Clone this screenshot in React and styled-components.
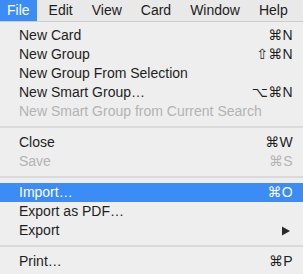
import React from "react";
import styled, { createGlobalStyle } from "styled-components";

const Global = createGlobalStyle`
  html, body { margin: 0; padding: 0; background: #eeeeee; }
  body { font-family: "Liberation Sans", "DejaVu Sans", sans-serif; -webkit-font-smoothing: antialiased; }
`;

const Page = styled.div`
  width: 303px;
  height: 274px;
  overflow: hidden;
  background: #eeeeee;
  display: flex;
  flex-direction: column;
`;

const MenuBar = styled.div`
  display: flex;
  height: 22px;
  box-sizing: border-box;
  border-bottom: 1px solid #cdcdcd;
  background: #e9e9e9;
`;

const Title = styled.div`
  font-size: 14px;
  line-height: 21px;
  padding: 0 9.5px;
  color: ${(p) => (p.$active ? "#ffffff" : "#1c1c1c")};
  background: ${(p) => (p.$active ? "#3b8cf6" : "transparent")};
  &:first-child {
    padding: 0 7.5px 0 7px;
    margin-right: 2px;
  }
`;

const Menu = styled.div`
  display: flex;
  flex-direction: column;
  padding: 4px 0 3px;
`;

const Row = styled.div`
  display: flex;
  align-items: center;
  justify-content: space-between;
  height: 19px;
  padding: 0 10px 0 19px;
  font-size: 14px;
  line-height: 19px;
  color: ${(p) => (p.$active ? "#ffffff" : p.$disabled ? "#b3b3b3" : "#1e1e1e")};
  background: ${(p) => (p.$active ? "#3b8cf6" : "transparent")};
`;

const Shortcut = styled.span`
  font-family: "Liberation Sans", "DejaVu Sans", sans-serif;
  white-space: nowrap;
  letter-spacing: 0.3px;
`;

const Sep = styled.div`
  height: 2px;
  margin: 5px 0;
  background: #dadada;
`;

const ArrowIcon = styled.svg`
  margin-right: 3px;
`;

const Arrow = () => (
  <ArrowIcon width="8" height="10" viewBox="0 0 8 10">
    <path d="M0 0.5 L8 5 L0 9.5 Z" fill="#2a2a2a" />
  </ArrowIcon>
);

const groups = [
  [
    { label: "New Card", sc: "⌘N" },
    { label: "New Group", sc: "⇧⌘N" },
    { label: "New Group From Selection" },
    { label: "New Smart Group…", sc: "⌥⌘N" },
    { label: "New Smart Group from Current Search", disabled: true },
  ],
  [
    { label: "Close", sc: "⌘W" },
    { label: "Save", sc: "⌘S", disabled: true },
  ],
  [
    { label: "Import…", sc: "⌘O", active: true },
    { label: "Export as PDF…" },
    { label: "Export", sub: true },
  ],
  [{ label: "Print…", sc: "⌘P" }],
];

export default function App() {
  return (
    <Page>
      <Global />
      <MenuBar>
        {["File", "Edit", "View", "Card", "Window", "Help"].map((t, i) => (
          <Title key={t} $active={i === 0}>
            {t}
          </Title>
        ))}
      </MenuBar>
      <Menu>
        {groups.map((g, gi) => (
          <React.Fragment key={gi}>
            {gi > 0 && <Sep />}
            {g.map((it) => (
              <Row key={it.label} $active={it.active} $disabled={it.disabled}>
                <span>{it.label}</span>
                {it.sc && <Shortcut>{it.sc}</Shortcut>}
                {it.sub && <Arrow />}
              </Row>
            ))}
          </React.Fragment>
        ))}
      </Menu>
    </Page>
  );
}
